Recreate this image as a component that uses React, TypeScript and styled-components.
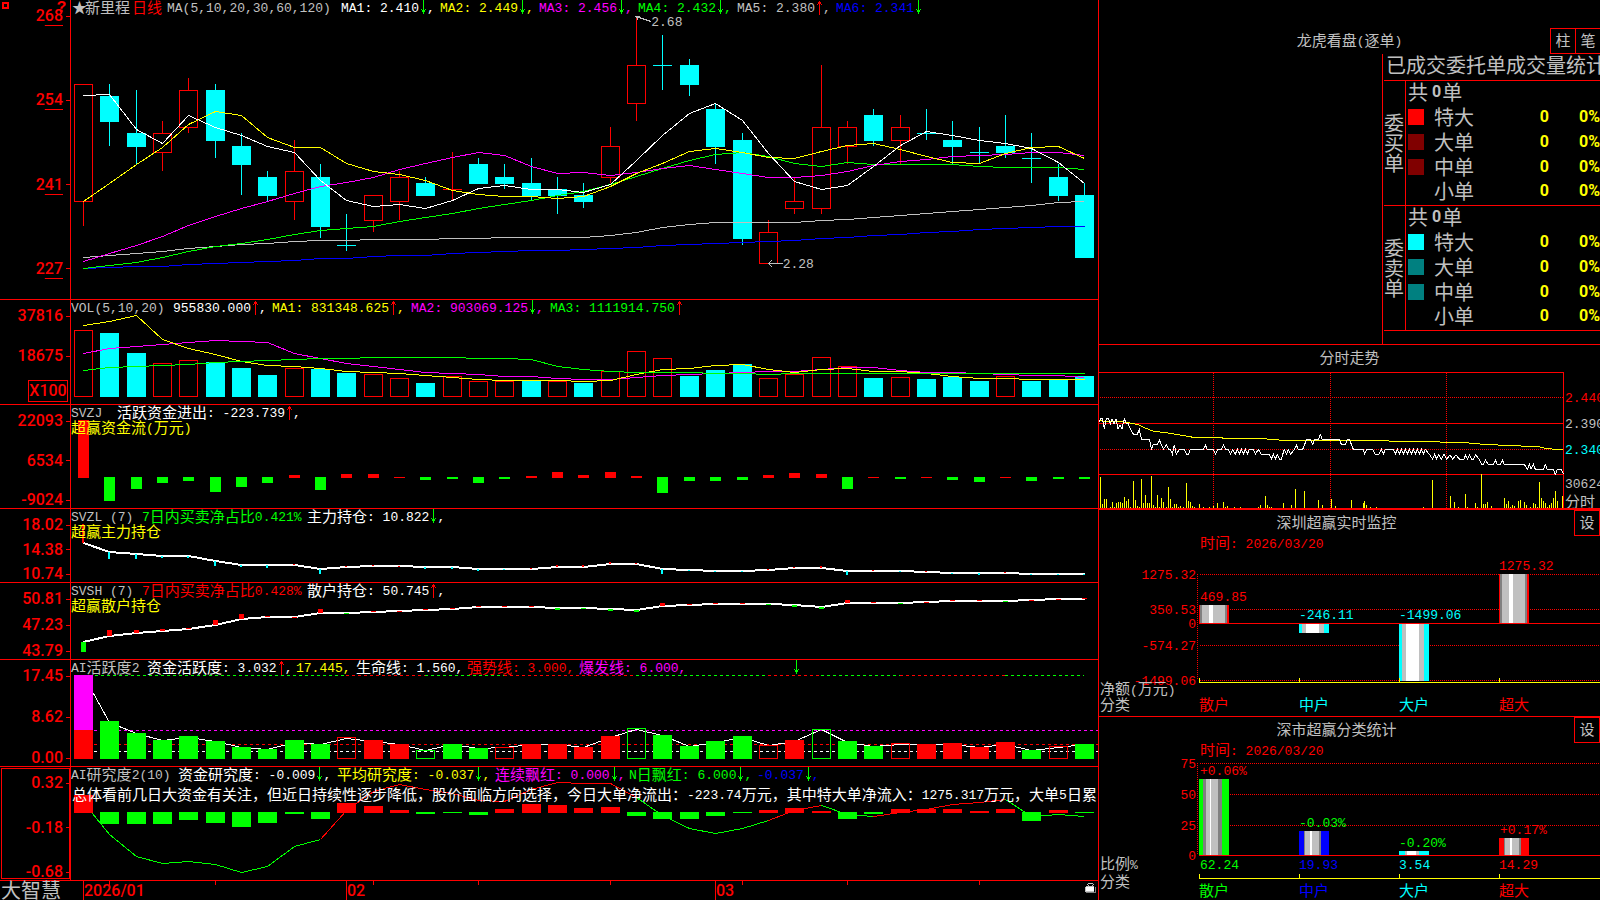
import React from "react";
import styled, { createGlobalStyle } from "styled-components";

const RED = "#ff0000";
const GREEN = "#00ff00";
const CYAN = "#00ffff";
const YELLOW = "#ffff00";
const MAGENTA = "#ff00ff";
const BLUE = "#0000ff";
const SILVER = "#c0c0c0";
const WHITE = "#ffffff";
const GRAY = "#808080";

const MONO = `"Liberation Mono", monospace`;
const CJK = `"Noto Sans CJK SC", sans-serif`;

const GlobalStyle = createGlobalStyle`
  * { box-sizing: border-box; }
  body { margin: 0; background: #000; color: ${SILVER}; overflow: hidden; }
  h2, p { margin: 0; font-weight: 400; }
`;

/* ---------- text ---------- */

const Han = styled.span`
  flex: none;
  padding-bottom: 2px;
  font: 15px/15px ${CJK};
`;
const Latin = styled.span`
  flex: none;
  padding-top: 2px;
  font: 13px/15px ${MONO};
`;
const split = (s: string) => s.split(/([\u2605\u2e80-\uffef]+)/).filter(Boolean);
const isHan = (s: string) => /[\u2605\u2e80-\uffef]/.test(s);

const T = ({ children }: { children: string }) => (
  <>
    {split(children).map((p, i) => (isHan(p) ? <Han key={i}>{p}</Han> : <Latin key={i}>{p}</Latin>))}
  </>
);

const Label = ({ x, y, c, end, children }: { x: number; y: number; c: string; end?: boolean; children: string }) => (
  <text x={x} y={y} fill={c} textAnchor={end ? "end" : "start"} xmlSpace="preserve">
    {split(children).map((p, i) => (
      <tspan key={i} fontSize={isHan(p) ? 15 : 13} fontFamily={isHan(p) ? CJK : MONO}>
        {p}
      </tspan>
    ))}
  </text>
);

/* ---------- frame ---------- */

const Page = styled.main`
  display: grid;
  grid-template-columns: minmax(0, 1099fr) minmax(0, 501fr);
  height: 100vh;
  background: #000;
`;
const Left = styled.section`
  position: relative;
  display: grid;
  grid-template-rows: 300fr 105fr 104fr 74fr 77fr 107fr 114fr 19fr;
  border-right: 1px solid ${RED};
  min-width: 0;
`;
const Panel = styled.section`
  display: grid;
  grid-template-columns: 71px minmax(0, 1fr);
  min-height: 0;
  border-bottom: 1px solid ${RED};
`;
const Axis = styled.div<{ $selected?: boolean; $bottom?: number }>`
  display: flex;
  flex-direction: column;
  align-items: flex-end;
  padding: 8px 0 ${(p) => p.$bottom ?? 0}px;
  border-right: 1px solid ${RED};
  min-height: 0;
  ${(p) => p.$selected && `outline: 1px solid ${RED}; outline-offset: -2px;`}
`;
const Scale = styled.div`
  flex: 1;
  display: flex;
  flex-direction: column;
  justify-content: space-between;
  align-items: flex-end;
`;
const Tick = styled.div`
  display: flex;
  align-items: center;
  gap: 3px;
  font: 500 16px/16px Roboto, sans-serif;
  color: ${RED};
  &::after {
    content: "";
    width: 4px;
    height: 1px;
    background: ${RED};
  }
`;
const Under = styled.span`
  text-decoration: underline 1px;
  text-underline-offset: 4px;
  text-decoration-skip-ink: none;
`;
const Unit = styled.div`
  margin: 16px 2px 2px 0;
  width: 40px;
  border: 1px solid ${RED};
  color: ${RED};
  font: 500 16px/20px Roboto, sans-serif;
  text-align: center;
`;
const Plot = styled.div`
  position: relative;
  display: grid;
  min-width: 0;
  min-height: 0;
  overflow: hidden;
  > * {
    grid-area: 1 / 1;
    min-width: 0;
    min-height: 0;
  }
`;
const Canvas = styled.svg`
  display: block;
  width: 100%;
  height: 100%;
  shape-rendering: crispEdges;
`;
const Over = styled.div`
  display: flex;
  flex-direction: column;
  align-items: flex-start;
  position: relative;
  white-space: pre;
`;
const Legend = styled.div`
  display: flex;
  height: 15px;
  align-items: center;
`;
const Item = styled.span<{ $c: string; $w?: number }>`
  display: flex;
  align-items: center;
  flex: none;
  height: 15px;
  color: ${(p) => p.$c};
  ${(p) => p.$w && `width: ${p.$w}px;`}
`;
const Caption = styled.p`
  display: flex;
  align-items: center;
  color: ${YELLOW};
  height: 15px;
`;
const Note = styled.p`
  display: flex;
  align-items: center;
  height: 25px;
  color: ${WHITE};
  padding-left: 1px;
`;

const Arrow = ({ up }: { up?: boolean }) => (
  <svg width="8" height="15" viewBox="0 0 8 15" shapeRendering="crispEdges" aria-hidden="true">
    {up ? (
      <path d="M4 1h1v14H4zM3 2h3v2H3zM2 4h1v1H2zM6 4h1v1H6z" fill={RED} />
    ) : (
      <path d="M4 0h1v14H4zM3 10h3v2H3zM2 9h1v1H2zM6 9h1v1H6z" fill={GREEN} />
    )}
  </svg>
);

type Entry = [text: string, color: string, width?: number, arrow?: "u" | "d", tail?: string];
const LegendRow = ({ items }: { items: Entry[] }) => (
  <Legend>
    {items.map(([t, c, w, a, tail = a ? "," : ""], i) => (
      <Item key={i} $c={c} $w={w}>
        <T>{t}</T>
        {a && <Arrow up={a === "u"} />}
        {tail && <T>{tail}</T>}
      </Item>
    ))}
  </Legend>
);

/* ---------- daily chart data; heights are kept in thirds of a pixel ---------- */

const left = (i: number) => Math.round(74 + 26.34 * i);
const mid = (i: number) => left(i) + 9;
const third = (base: number, v: number) => Math.round(base + v / 3);

const Line = ({ ys, base, c, w = 1, from = 0 }: { ys: number[]; base: number; c: string; w?: number; from?: number }) => (
  <polyline
    fill="none"
    stroke={c}
    strokeWidth={w}
    points={ys.map((v, i) => `${mid(i + from) + 0.5},${third(base, v) + (w === 1 ? 0.5 : 0)}`).join(" ")}
  />
);
const Box = ({ i, top, bottom, c, hollow }: { i: number; top: number; bottom: number; c: string; hollow?: boolean }) =>
  hollow ? (
    <rect x={left(i) + 0.5} y={top + 0.5} width={18} height={Math.max(bottom - top - 1, 1)} fill="none" stroke={c} />
  ) : (
    <rect x={left(i)} y={top} width={19} height={Math.max(bottom - top, 1)} fill={c} />
  );

// kind, high, body top, body bottom, low (cents)
const candles: [string, number, number, number, number][] = [
  ["r", 257, 257, 238, 234], ["c", 257, 255, 251, 247], ["c", 256, 249, 247, 244], ["r", 251, 249, 246, 243],
  ["r", 258, 256, 250, 249], ["c", 257, 256, 248, 245], ["c", 249, 247, 244, 239], ["c", 243, 242, 239, 238],
  ["r", 248, 243, 238, 235], ["c", 244, 242, 234, 232], ["c", 236, 231, 231, 230], ["r", 239, 239, 235, 233],
  ["r", 243, 242, 238, 235], ["c", 242, 241, 239, 239], ["r", 246, 240, 240, 238], ["c", 245, 244, 241, 241],
  ["c", 244, 242, 241, 240], ["c", 245, 241, 239, 238], ["c", 242, 240, 239, 236], ["c", 241, 239, 238, 237],
  ["r", 250, 247, 242, 241], ["r", 268, 260, 254, 251], ["c", 265, 260, 260, 256], ["c", 261, 260, 257, 255],
  ["c", 254, 253, 247, 244], ["c", 249, 248, 232, 231], ["r", 235, 233, 228, 228], ["r", 242, 238, 237, 236],
  ["r", 260, 250, 237, 236], ["r", 251, 250, 247, 244], ["c", 253, 252, 248, 247], ["r", 252, 250, 248, 244],
  ["c", 253, 249, 249, 248], ["c", 251, 248, 247, 244], ["c", 250, 246, 246, 244], ["c", 252, 247, 246, 245],
  ["c", 249, 245, 245, 241], ["c", 244, 242, 239, 238], ["c", 241, 239, 229, 229],
];
const price = (p: number) => Math.round(16 + (268 - p) * 6.18);

const ma: [string, number[]][] = [
  [BLUE, [805, 802, 799, 797, 791, 788, 786, 782, 779, 775, 773, 769, 766, 764, 760, 756, 752, 751, 749, 747, 744, 740, 736, 731, 728, 727, 723, 720, 715, 711, 706, 701, 697, 692, 688, 684, 680, 679, 679]],
  [SILVER, [772, 766, 760, 754, 745, 737, 732, 728, 724, 721, 720, 718, 717, 716, 715, 713, 712, 712, 712, 710, 706, 695, 682, 673, 667, 667, 667, 667, 661, 656, 650, 644, 640, 634, 628, 620, 614, 607, 603]],
  [GREEN, [805, 796, 787, 772, 753, 739, 730, 716, 701, 691, 685, 679, 664, 652, 640, 625, 613, 601, 586, 572, 553, 527, 505, 480, 462, 457, 469, 490, 499, 487, 493, 493, 493, 493, 499, 502, 502, 502, 508]],
  [MAGENTA, [784, 760, 736, 709, 676, 649, 625, 604, 580, 559, 547, 532, 508, 490, 472, 457, 466, 499, 520, 517, 526, 517, 505, 496, 506, 520, 532, 532, 525, 512, 494, 484, 478, 469, 466, 461, 457, 457, 466]],
  [YELLOW, [604, 548, 493, 440, 373, 334, 346, 412, 442, 442, 490, 514, 523, 541, 570, 583, 589, 589, 595, 588, 557, 520, 488, 454, 443, 455, 470, 475, 454, 434, 430, 448, 468, 487, 490, 460, 442, 439, 475]],
  [WHITE, [286, 283, 388, 428, 346, 380, 406, 437, 457, 540, 601, 619, 611, 625, 601, 565, 556, 568, 568, 577, 551, 480, 405, 340, 308, 360, 460, 542, 568, 554, 497, 436, 394, 406, 421, 428, 445, 485, 549]],
];

const volKinds = "rccrrcccrccrrcrrrcrcrrrcccrrrrcrcccrccc";
const vol = [106, 114, 174, 205, 196, 202, 219, 240, 220, 221, 234, 238, 250, 264, 244, 259, 259, 257, 259, 264, 229, 169, 190, 243, 225, 207, 250, 238, 187, 214, 249, 247, 252, 246, 258, 244, 258, 253, 243];
const volMa: [string, number[]][] = [
  [MAGENTA, [175, 160, 152, 147, 140, 136, 139, 140, 175, 189, 203, 212, 222, 230, 235, 238, 243, 244, 250, 253, 253, 247, 241, 238, 235, 230, 229, 229, 222, 217, 217, 226, 232, 232, 233, 238, 241, 241, 247]],
  [YELLOW, [91, 79, 61, 133, 160, 178, 197, 211, 214, 219, 228, 232, 233, 241, 247, 251, 256, 256, 256, 259, 254, 236, 223, 219, 211, 208, 222, 232, 223, 220, 229, 229, 233, 242, 249, 250, 253, 253, 253]],
  [GREEN, [226, 217, 214, 211, 206, 202, 199, 196, 193, 190, 189, 187, 187, 187, 187, 188, 190, 191, 213, 223, 229, 230, 232, 232, 235, 235, 237, 235, 235, 235, 235, 235, 235, 235, 235, 235, 235, 235, 235]],
];

const flow = [376, 618, 582, 564, 558, 591, 576, 564, 540, 585, 537, 537, 546, 555, 552, 564, 552, 543, 531, 540, 531, 543, 594, 558, 558, 555, 540, 534, 537, 582, 546, 552, 546, 555, 561, 546, 558, 552, 552];

const mainHold = [745, 770, 778, 783, 783, 799, 809, 810, 810, 822, 817, 813, 813, 816, 817, 822, 822, 822, 816, 815, 807, 807, 822, 824, 828, 828, 826, 819, 819, 828, 828, 828, 830, 833, 834, 834, 836, 837, 837];
const mainMark = [688, 792, 792, 789, 789, 813, 816, 819, 807, 837, 813, 810, 812, 822, 822, 828, 825, 819, 810, 810, 801, 804, 837, 828, 831, 831, 822, 816, 813, 840, 826, 831, 827, 836, 840, 831, 840, 840, 840];
const retailHold = [156, 138, 130, 124, 118, 104, 88, 81, 81, 70, 69, 67, 64, 61, 58, 51, 50, 50, 54, 54, 57, 60, 48, 45, 42, 42, 43, 45, 51, 39, 39, 40, 37, 33, 33, 33, 31, 28, 27];
const retailMark = [186, 120, 120, 117, 113, 90, 72, 78, 80, 57, 72, 63, 63, 57, 54, 47, 49, 49, 60, 57, 63, 66, 39, 41, 39, 39, 45, 51, 57, 30, 36, 42, 36, 30, 30, 36, 30, 27, 24];

// lower case = solid, upper case = outline
const actKinds = "mggggggggg" + "RrrGggRrrr" + "rGgggg" + "RrG" + "gg" + "RrrrrgRg";
const act = [255, 393, 429, 450, 438, 453, 471, 477, 450, 462, 442, 450, 462, 481, 462, 474, 472, 462, 462, 471, 438, 415, 435, 468, 453, 438, 466, 450, 418, 453, 468, 460, 463, 459, 471, 456, 480, 469, 462];
const actLine = [255, 397, 428, 450, 441, 453, 471, 477, 456, 462, 443, 453, 463, 481, 463, 474, 472, 463, 463, 471, 440, 417, 435, 468, 455, 442, 464, 452, 418, 455, 467, 463, 463, 463, 471, 462, 480, 472, 463];
const actTrend: [number, number, string][] = [
  [0, 10, GREEN], [10, 13, RED], [13, 16, GREEN], [16, 21, RED], [21, 26, GREEN], [26, 28, RED], [28, 31, GREEN], [31, 35, RED], [35, 38, GREEN],
];

const study = [615, 702, 702, 702, 690, 699, 711, 699, 672, 687, 639, 648, 660, 672, 669, 675, 657, 642, 645, 654, 651, 678, 687, 687, 678, 669, 660, 654, 663, 687, 672, 657, 657, 657, 663, 657, 693, 660, 669];
const studyLine = [636, 733, 799, 820, 814, 823, 847, 828, 769, 748, 660, 603, 583, 597, 610, 630, 632, 597, 577, 580, 580, 620, 674, 715, 730, 715, 691, 659, 646, 671, 679, 666, 656, 642, 637, 628, 678, 671, 677];
const studyTrend: [number, number, string][] = [
  [0, 9, GREEN], [9, 21, RED], [21, 26, GREEN], [26, 28, RED], [28, 30, GREEN], [30, 35, RED], [35, 38, GREEN],
];

const box = (top: number, h: number) => ({ viewBox: `71 ${top} 1027 ${h}`, preserveAspectRatio: "none" });

const Ticks = ({ values }: { values: string[] }) => (
  <Scale>
    {values.map((v) => (
      <Tick key={v}>{v}</Tick>
    ))}
  </Scale>
);

const Tip = styled.span<{ $x: number; $y: number }>`
  position: absolute;
  left: ${(p) => p.$x}%;
  top: ${(p) => p.$y}%;
  color: ${SILVER};
  font: 13px/15px ${MONO};
`;
const Corner = styled.span`
  position: absolute;
  left: 2px;
  top: 2px;
  width: 7px;
  height: 7px;
  border: 2px solid ${RED};
`;
const Help = styled.button`
  position: absolute;
  left: 56px;
  top: 0;
  width: 11px;
  height: 16px;
  padding: 0;
  border: 0;
  background: none;
  color: ${RED};
  font: 700 16px/16px ${MONO};
  cursor: help;
`;

const DailyPanel = () => (
  <Panel>
    <Axis $bottom={22}>
      <Scale>
        {["268", "254", "241", "227"].map((v) => (
          <Tick key={v}>
            <span>
              {v[0]}
              <Under>{v.slice(1)}</Under>
            </span>
          </Tick>
        ))}
      </Scale>
    </Axis>
    <Plot>
      <Canvas {...box(0, 299)}>
        {candles.map(([k, h, a, b, l], i) => {
          const c = k === "r" ? RED : CYAN;
          const x = mid(i) + 0.5;
          const flat = a === b;
          return (
            <g key={i}>
              {flat ? (
                <>
                  <path d={`M${x} ${price(h)}V${price(l)}`} stroke={c} />
                  <rect x={left(i)} y={price(a)} width={19} height={1} fill={c} />
                </>
              ) : (
                <>
                  <path d={`M${x} ${price(h)}V${price(a)}M${x} ${price(b)}V${price(l)}`} stroke={c} />
                  <Box i={i} top={price(a)} bottom={price(b) + 1} c={c} hollow={k === "r"} />
                </>
              )}
            </g>
          );
        })}
        {ma.map(([c, ys]) => (
          <Line key={c} ys={ys} base={0} c={c} />
        ))}
        <path d="M651 21.5L636 16.5M640 16.5H636L638 20M783 263.5H769M772 260L769 263.5L772 267" stroke={SILVER} fill="none" />
      </Canvas>
      <Over>
        <LegendRow
          items={[
            [" ", SILVER, 1], ["★", SILVER, 13], ["新里程", SILVER, 47], ["日线", RED, 35], ["MA(5,10,20,30,60,120)", SILVER, 174],
            ["MA1: 2.410", WHITE, 99, "d"], ["MA2: 2.449", YELLOW, 99, "d"], ["MA3: 2.456", MAGENTA, 99, "d"],
            ["MA4: 2.432", GREEN, 99, "d"], ["MA5: 2.380", SILVER, 99, "u"], ["MA6: 2.341", BLUE, 99, "d", ""],
          ]}
        />
      </Over>
      <Tip $x={56.5} $y={5}>2.68</Tip>
      <Tip $x={69.3} $y={86}>2.28</Tip>
    </Plot>
  </Panel>
);

const VolumePanel = () => (
  <Panel>
    <Axis>
      <Ticks values={["37816", "18675"]} />
      <Unit>X100</Unit>
    </Axis>
    <Plot>
      <Canvas {...box(300, 104)}>
        {vol.map((v, i) => (
          <Box key={i} i={i} top={third(295, v)} bottom={397} c={volKinds[i] === "r" ? RED : CYAN} hollow={volKinds[i] === "r"} />
        ))}
        {volMa.map(([c, ys]) => (
          <Line key={c} ys={ys} base={295} c={c} />
        ))}
      </Canvas>
      <Over>
        <LegendRow
          items={[
            ["VOL(5,10,20)", SILVER, 102], ["955830.000", WHITE, 99, "u"], ["MA1: 831348.625", YELLOW, 139, "u"],
            ["MA2: 903069.125", MAGENTA, 139, "d"], ["MA3: 1111914.750", GREEN, 140, "u", ""],
          ]}
        />
      </Over>
    </Plot>
  </Panel>
);

const FlowPanel = () => (
  <Panel>
    <Axis>
      <Ticks values={["22093", "6534", "-9024"]} />
    </Axis>
    <Plot>
      <Canvas {...box(405, 103)}>
        {flow.map((v, i) => {
          const up = v < 549;
          const top = up ? third(295, v) : 477;
          const bottom = up ? 478 : third(295, v);
          return <rect key={i} x={left(i) + 4} y={top} width={11} height={bottom - top} fill={up ? RED : GREEN} />;
        })}
      </Canvas>
      <Over>
        <LegendRow items={[["SVZJ", SILVER, 46], ["活跃资金进出: -223.739", WHITE, 200, "u"]]} />
        <Caption><T>超赢资金流(万元)</T></Caption>
      </Over>
    </Plot>
  </Panel>
);

const HoldPanel = ({ top, h, base, line, marks, markWidth, down, up, ticks, items, caption }: {
  top: number; h: number; base: number; line: number[]; marks: number[]; markWidth: number; down: string; up: string;
  ticks: string[]; items: Entry[]; caption: string;
}) => (
  <Panel>
    <Axis>
      <Ticks values={ticks} />
    </Axis>
    <Plot>
      <Canvas {...box(top, h)}>
        <Line ys={line} base={base} c={WHITE} w={2} />
        {marks.map((v, i) => {
          const a = third(base, Math.min(v, line[i]));
          const b = third(base, Math.max(v, line[i]));
          return (
            <rect key={i} x={mid(i) - (markWidth >> 1)} y={a} width={markWidth} height={Math.max(b - a, 1)} fill={v < line[i] ? up : down} />
          );
        })}
      </Canvas>
      <Over>
        <LegendRow items={items} />
        <Caption><T>{caption}</T></Caption>
      </Over>
    </Plot>
  </Panel>
);

const ActivityPanel = () => (
  <Panel>
    <Axis>
      <Ticks values={["17.45", "8.62", "0.00"]} />
    </Axis>
    <Plot>
      <Canvas {...box(660, 106)}>
        <g strokeDasharray="3 3">
          {actTrend.map(([a, b, c]) => (
            <path key={a} d={`M${mid(a)} 675.5H${mid(b)}`} stroke={c} />
          ))}
          <path d="M94 730.5H1098" stroke={MAGENTA} />
          <path d="M94 744.5H1098" stroke={RED} />
          <path d="M94 751.5H1098" stroke={WHITE} />
        </g>
        <Line ys={actLine} base={590} c={WHITE} />
        {act.map((v, i) => {
          const k = actKinds[i];
          const c = k === "m" ? MAGENTA : k.toLowerCase() === "g" ? GREEN : RED;
          return <Box key={i} i={i} top={third(590, v)} bottom={759} c={c} hollow={k !== k.toLowerCase()} />;
        })}
        <Box i={0} top={730} bottom={759} c={RED} />
      </Canvas>
      <Over>
        <LegendRow
          items={[
            ["AI活跃度2", SILVER, 76], ["资金活跃度: 3.032", WHITE, 149, "u"], ["17.445,", YELLOW, 60], ["生命线: 1.560,", WHITE, 111],
            ["强势线: 3.000,", RED, 112], ["爆发线: 6.000,", MAGENTA, 213], ["", GREEN, 20, "d", ""],
          ]}
        />
      </Over>
    </Plot>
  </Panel>
);

const StudyPanel = () => (
  <Panel>
    <Axis $selected>
      <Ticks values={["0.32", "-0.18", "-0.68"]} />
    </Axis>
    <Plot>
      <Canvas {...box(767, 113)}>
        {studyTrend.map(([a, b, c]) => (
          <Line key={a} ys={studyLine.slice(a, b + 1)} from={a} base={590} c={c} />
        ))}
        {study.map((v, i) => {
          const below = v > 666;
          return <Box key={i} i={i} top={below ? 812 : third(590, v)} bottom={below ? third(590, v) : 813} c={below ? GREEN : RED} />;
        })}
      </Canvas>
      <Over>
        <LegendRow
          items={[
            ["AI研究度2(10)", SILVER, 107], ["资金研究度: -0.009", WHITE, 159, "d"], ["平均研究度: -0.037", YELLOW, 158, "d"],
            ["连续飘红: 0.000", MAGENTA, 134, "d"], ["N日飘红: 6.000", GREEN, 128, "d"], ["-0.037", BLUE, 80, "d"],
          ]}
        />
        <Note>
          <T>总体看前几日大资金有关注，但近日持续性逐步降低，股价面临方向选择，今日大单净流出：-223.74万元，其中特大单净流入：1275.317万元，大单5日累</T>
        </Note>
      </Over>
    </Plot>
  </Panel>
);

const Footer = styled.footer`
  display: grid;
  grid-template-columns: 71px minmax(0, 1fr);
`;
const Brand = styled.span`
  padding-left: 1px;
  font: 20px/17px ${CJK};
  white-space: nowrap;
`;
const Month = styled.span<{ $x: number }>`
  position: absolute;
  left: ${(p) => p.$x}%;
  top: 0;
  color: ${RED};
  font: 500 16px/19px Roboto, sans-serif;
`;
const Lock = styled.svg`
  position: absolute;
  right: 2px;
  top: 1px;
`;

const months: [number, string][] = [[0, "2026/01"], [10, "02"], [24, "03"]];
const TimeAxis = () => (
  <Footer>
    <Brand>大智慧</Brand>
    <Plot>
      <Canvas {...box(881, 19)}>
        {months.map(([i]) => (
          <rect key={i} x={mid(i)} y={881} width={1} height={19} fill={RED} />
        ))}
        {[1, 5, 11, 15, 20, 25, 29, 34].map((i) => (
          <rect key={i} x={mid(i)} y={881} width={1} height={4} fill={RED} />
        ))}
      </Canvas>
      {months.map(([i, t]) => (
        <Month key={t} $x={((mid(i) + 1 - 71) / 1027) * 100}>{t}</Month>
      ))}
      <Lock width="11" height="12" viewBox="0 0 11 12" shapeRendering="crispEdges" aria-label="锁定">
        <path d="M3 1h5v1H3zM2 2h1v1H2zM8 2h1v1H8zM3 3h1v1H3zM7 3h1v1H7zM1 4h8v1H1z" fill={SILVER} />
        <path d="M1 5h8v4H1z" fill={WHITE} />
        <path d="M0 5h1v5H0zM1 9h8v1H1z" fill={SILVER} />
        <path d="M10 5h1v6H1v-1h9z" fill={GRAY} />
      </Lock>
    </Plot>
  </Footer>
);

/* ---------- right side ---------- */

const Right = styled.aside`
  display: grid;
  grid-template-rows: 345fr 165fr 207fr 183fr;
  min-width: 0;
  overflow: hidden;
`;
const Card = styled.section<{ $b?: number }>`
  display: flex;
  flex-direction: column;
  min-height: 0;
  overflow: hidden;
  border-bottom: ${(p) => p.$b ?? 1}px solid ${RED};
`;
const Head = styled.header<{ $h: number; $top?: number }>`
  display: grid;
  flex: none;
  height: ${(p) => p.$h}px;
  padding-top: ${(p) => p.$top ?? 0}px;
  > * {
    grid-area: 1 / 1;
  }
`;
const Title = styled.h2<{ $inset?: boolean }>`
  place-self: center;
  display: flex;
  align-items: center;
  height: 17px;
  margin-bottom: 2px;
  ${(p) => p.$inset && "padding-right: 26px;"}
`;
const Tools = styled.div`
  justify-self: end;
  align-self: start;
  display: flex;
`;
const ToolButton = styled.button<{ $w?: number }>`
  width: ${(p) => p.$w ?? 25}px;
  height: 26px;
  padding: 0 0 2px;
  border: 1px solid ${RED};
  border-right-width: ${(p) => (p.$w ? 1 : 0)}px;
  background: #000;
  color: ${SILVER};
  font: 15px/22px ${CJK};
`;
const BoardBody = styled.div`
  flex: 1;
  display: flex;
  justify-content: flex-end;
`;
const Board = styled.div`
  width: 218px;
  border-left: 1px solid ${RED};
  padding-left: 1px;
  overflow: hidden;
`;
const BoardTitle = styled.p`
  height: 27px;
  padding-left: 2px;
  border-bottom: 1px solid ${RED};
  font: 20px/22px ${CJK};
  white-space: nowrap;
`;
const OrderTable = styled.table`
  border-collapse: separate;
  border-spacing: 0;
  table-layout: fixed;
  width: 100%;
  td, th {
    height: 25px;
    padding: 0 0 4px;
    font: 20px/20px ${CJK};
    white-space: nowrap;
  }
  th {
    padding: 0;
  }
  tbody tr:last-child > *, tbody tr:first-child > th {
    border-bottom: 1px solid ${RED};
  }
`;
const Side = styled.th`
  border-right: 1px solid ${RED};
  span {
    display: block;
    line-height: 20px;
    text-align: left;
  }
`;
const Swatch = styled.i<{ $c: string }>`
  display: block;
  width: 16px;
  height: 16px;
  margin-left: 2px;
  background: ${(p) => p.$c};
`;
const Num = styled.b`
  display: block;
  text-align: right;
  color: ${YELLOW};
  font: 700 16px/20px Roboto, sans-serif;
`;
const Summary = styled.div`
  display: flex;
  align-items: center;
  padding-left: 2px;
  height: 20px;
`;
const Total = styled.b`
  padding: 0 1px 0 4px;
  font: 700 16px/16px Roboto, sans-serif;
`;

const groups: [string, string[]][] = [
  ["委买单", ["#ff0000", "#800000", "#800000", "#000000"]],
  ["委卖单", ["#00ffff", "#008080", "#008080", "#000000"]],
];
const sizes = ["特大", "大单", "中单", "小单"];

const OrderBoard = () => (
  <Card>
    <Head $h={54} $top={28}>
      <Title><T>龙虎看盘(逐单)</T></Title>
      <Tools>
        <ToolButton>柱</ToolButton>
        <ToolButton>笔</ToolButton>
      </Tools>
    </Head>
    <BoardBody>
      <Board>
        <BoardTitle>已成交委托单成交量统计</BoardTitle>
        <OrderTable>
          <colgroup>
            <col width="22" />
            <col width="28" />
            <col width="65" />
            <col width="50" />
            <col />
          </colgroup>
          {groups.map(([name, colors]) => (
            <tbody key={name}>
              <tr>
                <Side rowSpan={5} scope="rowgroup">
                  {[...name].map((ch) => (
                    <span key={ch}>{ch}</span>
                  ))}
                </Side>
                <td colSpan={4}>
                  <Summary>共<Total>0</Total>单</Summary>
                </td>
              </tr>
              {sizes.map((s, i) => (
                <tr key={s}>
                  <td><Swatch $c={colors[i]} /></td>
                  <td>{s}</td>
                  <td><Num>0</Num></td>
                  <td><Num>0%</Num></td>
                </tr>
              ))}
            </tbody>
          ))}
        </OrderTable>
      </Board>
    </BoardBody>
  </Card>
);

// intraday chart, three units to a pixel
const volumeBars = "31,411 37,492 43,477 49,477 55,503 61,500 67,486 73,500 79,490 85,486 91,486 97,490 103,470 109,483 115,478 121,500 130,423 136,480 142,497 148,500 154,417 160,490 166,465 172,489 178,489 184,408 190,495 196,500 202,465 208,500 214,474 220,486 229,500 235,441 241,477 247,500 253,492 259,492 265,500 271,497 280,502 289,430 295,483 301,486 307,497 313,500 319,504 328,492 340,500 346,504 358,500 370,497 376,504 382,489 400,486 406,500 412,497 418,503 433,500 439,503 445,504 451,500 499,504 505,500 511,495 526,468 532,495 538,500 544,500 550,503 556,504 562,504 574,503 580,489 604,495 616,447 643,453 673,504 685,480 697,495 724,477 736,498 784,480 820,489 823,483 829,495 841,500 847,504 859,500 895,504 913,503 937,504 982,504 988,503 1000,500 1027,420 1039,503 1081,468 1093,486 1105,500 1111,503 1126,462 1132,500 1144,503 1156,489 1162,500 1174,402 1180,492 1186,492 1192,486 1204,498 1243,474 1249,492 1255,483 1261,500 1267,495 1273,497 1285,483 1291,480 1303,486 1309,495 1321,500 1330,489 1336,492 1342,500 1348,426 1354,474 1360,483 1366,490 1372,500 1378,495 1384,489 1390,474 1396,453 1402,483 1418,468"
  .split(" ")
  .map((p) => p.split(",").map(Number));
const tape = "28,247 31,236 37,236 43,266 49,236 55,236 61,251 66,236 72,251 78,236 84,266 90,254 96,266 103,236 108,250 114,250 120,264 130,282 142,282 148,268 154,297 178,297 184,327 190,313 202,313 208,300 220,327 229,315 235,327 241,327 247,342 253,315 259,342 268,328 283,328 289,342 296,342 301,328 340,328 346,315 352,328 370,328 376,342 383,328 394,328 400,315 407,328 415,328 421,342 428,328 436,342 442,328 448,342 454,328 460,342 466,328 472,342 478,328 490,328 496,342 505,328 514,343 538,343 544,357 550,343 556,357 562,345 568,357 574,357 583,328 590,342 595,328 602,342 614,328 619,315 625,328 638,328 650,298 661,298 668,313 674,298 685,298 691,284 697,298 748,298 754,313 766,313 772,298 778,298 790,328 820,328 824,342 830,328 848,328 856,343 866,343 874,328 880,342 886,328 910,328 916,342 922,328 928,342 934,328 940,342 946,328 952,342 958,328 964,342 970,328 976,342 982,328 988,342 994,328 1000,342 1006,328 1018,343 1028,357 1034,343 1040,357 1046,345 1054,357 1062,343 1070,357 1080,345 1088,357 1098,345 1108,357 1122,357 1127,345 1133,357 1139,345 1145,357 1151,357 1157,345 1167,357 1175,373 1180,373 1187,360 1194,373 1210,373 1216,360 1222,373 1231,373 1237,360 1243,373 1303,373 1312,388 1318,373 1323,388 1330,373 1336,388 1360,388 1366,374 1372,388 1390,388 1396,403 1402,388 1413,388 1420,402";
const average = "28,241 45,245 95,245 127,250 150,256 170,266 192,274 235,279 270,285 310,292 395,293 400,295 520,296 580,301 828,302 1025,305 1100,308 1125,308 1170,312 1240,316 1345,320 1365,325 1395,328 1420,329";

const Quotes = styled.div`
  position: relative;
  justify-self: end;
  width: 35px;
  padding-top: 18px;
  display: flex;
  flex-direction: column;
  gap: 11px;
  white-space: nowrap;
`;
const Quote = styled.span<{ $c: string }>`
  display: flex;
  align-items: center;
  height: 15px;
  color: ${(p) => p.$c};
`;
const VolumeMark = styled.div`
  display: flex;
  flex-direction: column;
  gap: 3px;
  padding-top: 8px;
`;
const Stretch = styled(Plot)`
  flex: 1;
`;

const Intraday = () => (
  <Card $b={2}>
    <Head $h={27}>
      <Title><T>分时走势</T></Title>
    </Head>
    <Stretch>
      <Canvas viewBox="27 96 1503 408" preserveAspectRatio="none">
        <g stroke={RED} strokeWidth={3} fill="none">
          <path d="M27 97.5H1422M27 250.5H1420M27 403.5H1420M1420.5 97V505" />
          <path d="M30 172.5H1420M30 328.5H1420M370.5 100V505M721.5 100V505M1069.5 100V505" strokeDasharray="3 3" />
        </g>
        {volumeBars.map(([x, y]) => (
          <rect key={x} x={Math.floor(x / 3) * 3} y={y} width={3} height={508 - y} fill={YELLOW} />
        ))}
        <polyline points={average} fill="none" stroke={YELLOW} strokeWidth={3} />
        <polyline points={tape} fill="none" stroke={WHITE} strokeWidth={3} />
      </Canvas>
      <Quotes>
        <Quote $c={RED}><T>2.440</T></Quote>
        <Quote $c={SILVER}><T>2.390</T></Quote>
        <Quote $c={CYAN}><T>2.340</T></Quote>
        <VolumeMark>
          <Quote $c={SILVER}><T>30624</T></Quote>
          <Quote $c={SILVER}><T>分时</T></Quote>
        </VolumeMark>
      </Quotes>
    </Stretch>
  </Card>
);

const Chart = styled.svg`
  display: block;
  width: 100%;
  flex: 1;
  min-height: 0;
  shape-rendering: crispEdges;
`;

type Stripe = [number, string][];
const Cylinder = ({ x, top, bottom, stripes }: { x: number; top: number; bottom: number; stripes: Stripe }) => {
  let at = x;
  return (
    <>
      {stripes.map(([w, c], i) => {
        const r = <rect key={i} x={at} y={top} width={w} height={bottom - top} fill={c} />;
        at += w;
        return r;
      })}
    </>
  );
};
const inflow: Stripe = [[1, RED], [2, GRAY], [7, SILVER], [4, WHITE], [12, SILVER], [2, GRAY], [2, RED]];
const outflow: Stripe = [[3, CYAN], [4, SILVER], [13, WHITE], [5, SILVER], [5, CYAN]];
const thin = (c: string): Stripe => [[5, c], [1, GRAY], [5, SILVER], [2, WHITE], [7, SILVER], [2, GRAY], [8, c]];

const Dots = ({ ys, bottom }: { ys: number[]; bottom: number }) => (
  <g stroke={RED} strokeDasharray="1 1">
    {ys.map((y) => (
      <line key={y} x1={101} x2="100%" y1={y + 0.5} y2={y + 0.5} />
    ))}
    <line x1={98.5} x2={98.5} y1={ys[0]} y2={bottom} />
  </g>
);
const Base = ({ y }: { y: number }) => (
  <g stroke={YELLOW}>
    <line x1={100} x2="100%" y1={y + 0.5} y2={y + 0.5} />
    <path d={[100, 200, 300, 400].map((x) => `M${x + 0.5} ${y - 4}v4`).join("")} />
  </g>
);

const Monitor = () => (
  <Card>
    <Head $h={26}>
      <Title $inset><T>深圳超赢实时监控</T></Title>
      <Tools><ToolButton $w={26}>设</ToolButton></Tools>
    </Head>
    <Chart>
      <Dots ys={[38, 73, 109, 144]} bottom={144} />
      <Label x={101} y={12} c={RED}>时间: 2026/03/20</Label>
      <Label end x={97} y={43} c={RED}>1275.32</Label>
      <Label end x={97} y={78} c={RED}>350.53</Label>
      <Label end x={97} y={92} c={RED}>0</Label>
      <Label end x={97} y={114} c={RED}>-574.27</Label>
      <Label end x={97} y={149} c={RED}>-1499.06</Label>
      <Cylinder x={100} top={69} bottom={87} stripes={inflow} />
      <Cylinder x={200} top={88} bottom={97} stripes={outflow} />
      <Cylinder x={300} top={88} bottom={145} stripes={outflow} />
      <Cylinder x={400} top={38} bottom={87} stripes={inflow} />
      <line x1={100} x2="100%" y1={87.5} y2={87.5} stroke={RED} />
      <Base y={146} />
      <Label x={101} y={65} c={RED}>469.85</Label>
      <Label x={200} y={83} c={CYAN}>-246.11</Label>
      <Label x={300} y={83} c={CYAN}>-1499.06</Label>
      <Label x={400} y={34} c={RED}>1275.32</Label>
      <Label x={1} y={158} c={SILVER}>净额(万元)</Label>
      <Label x={1} y={174} c={SILVER}>分类</Label>
      <Label x={100} y={174} c={RED}>散户</Label>
      <Label x={200} y={174} c={CYAN}>中户</Label>
      <Label x={300} y={174} c={CYAN}>大户</Label>
      <Label x={400} y={174} c={RED}>超大</Label>
    </Chart>
  </Card>
);

const Classes = () => (
  <Card $b={0}>
    <Head $h={26}>
      <Title $inset><T>深市超赢分类统计</T></Title>
      <Tools><ToolButton $w={26}>设</ToolButton></Tools>
    </Head>
    <Chart>
      <Dots ys={[20, 51, 82]} bottom={112} />
      <Label x={101} y={12} c={RED}>时间: 2026/03/20</Label>
      <Label end x={97} y={25} c={RED}>75</Label>
      <Label end x={97} y={56} c={RED}>50</Label>
      <Label end x={97} y={87} c={RED}>25</Label>
      <Label end x={97} y={117} c={RED}>0</Label>
      <Cylinder x={100} top={36} bottom={112} stripes={[[4, GREEN], [3, GRAY], [4, SILVER], [1, WHITE], [7, SILVER], [4, GRAY], [7, GREEN]]} />
      <Cylinder x={200} top={88} bottom={112} stripes={thin(BLUE)} />
      <Cylinder x={300} top={108} bottom={112} stripes={[[6, CYAN], [2, SILVER], [9, WHITE], [3, SILVER], [10, CYAN]]} />
      <Cylinder x={400} top={95} bottom={112} stripes={thin(RED)} />
      <line x1={100} x2="100%" y1={112.5} y2={112.5} stroke={RED} />
      <Base y={135} />
      <Label x={101} y={32} c={RED}>+0.06%</Label>
      <Label x={200} y={84} c={GREEN}>-0.03%</Label>
      <Label x={300} y={104} c={GREEN}>-0.20%</Label>
      <Label x={401} y={91} c={RED}>+0.17%</Label>
      <Label x={101} y={126} c={GREEN}>62.24</Label>
      <Label x={200} y={126} c={BLUE}>19.93</Label>
      <Label x={300} y={126} c={CYAN}>3.54</Label>
      <Label x={400} y={126} c={RED}>14.29</Label>
      <Label x={1} y={126} c={SILVER}>比例%</Label>
      <Label x={1} y={144} c={SILVER}>分类</Label>
      <Label x={100} y={153} c={GREEN}>散户</Label>
      <Label x={200} y={153} c={BLUE}>中户</Label>
      <Label x={300} y={153} c={CYAN}>大户</Label>
      <Label x={400} y={153} c={RED}>超大</Label>
    </Chart>
  </Card>
);

export default function App() {
  return (
    <>
      <GlobalStyle />
      <Page>
        <Left>
          <DailyPanel />
          <VolumePanel />
          <FlowPanel />
          <HoldPanel
            top={509} h={73} base={295} line={mainHold} marks={mainMark} markWidth={2} up={RED} down={CYAN}
            ticks={["18.02", "14.38", "10.74"]}
            items={[["SVZL (7)", SILVER, 71], ["7日内买卖净占比0.421%", GREEN, 165], ["主力持仓: 10.822", WHITE, 160, "d"]]}
            caption="超赢主力持仓"
          />
          <HoldPanel
            top={583} h={76} base={590} line={retailHold} marks={retailMark} markWidth={5} up={RED} down={GREEN}
            ticks={["50.81", "47.23", "43.79"]}
            items={[["SVSH (7)", SILVER, 71], ["7日内买卖净占比0.428%", RED, 165], ["散户持仓: 50.745", WHITE, 160, "u"]]}
            caption="超赢散户持仓"
          />
          <ActivityPanel />
          <StudyPanel />
          <TimeAxis />
          <Corner />
          <Help aria-label="帮助">?</Help>
        </Left>
        <Right>
          <OrderBoard />
          <Intraday />
          <Monitor />
          <Classes />
        </Right>
      </Page>
    </>
  );
}
